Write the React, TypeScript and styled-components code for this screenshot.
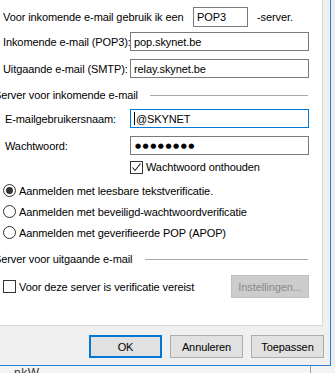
import React from 'react';
import styled, { createGlobalStyle } from 'styled-components';

const GlobalStyle = createGlobalStyle`
  html, body {
    margin: 0;
    padding: 0;
    background: #f2f2f2;
  }
  body {
    font-family: 'Liberation Sans', Arial, sans-serif;
    font-size: 11px;
    color: #000;
  }
`;

const Screen = styled.div`
  width: 335px;
  height: 373px;
  overflow: hidden;
  display: grid;
  grid-template-columns: 331px 4px;
  grid-template-rows: 366px 7px;
  background: #f2f2f2;
`;

const Dialog = styled.div`
  background: #f0f0f0;
  border-right: 1px solid #2a7fd4;
  border-bottom: 1px solid #2a7fd4;
  padding-right: 7px;
  display: flex;
  flex-direction: column;
`;

const SideStrip = styled.div`
  background: #ececec;
`;

const BelowStrip = styled.div`
  grid-column: 1 / span 2;
  position: relative;
  overflow: hidden;
  background: #f4f4f4;
  padding-left: 14px;
`;

const PeekText = styled.span`
  display: block;
  margin-top: 1px;
  font-size: 12px;
  line-height: 12px;
  color: #333;
  letter-spacing: 0.5px;
`;

const PeekEdge = styled.div`
  position: absolute;
  top: 0;
  bottom: 0;
  left: ${(p: { left: number }) => p.left}px;
  width: 1px;
  background: #9a9a9a;
`;

const TabPanel = styled.div`
  height: 326px;
  box-sizing: border-box;
  background: #fff;
  border-right: 1px solid #d9d9d9;
  border-bottom: 1px solid #d9d9d9;
  padding: 7px 0 0 3px;
  overflow: hidden;
  display: flex;
  flex-direction: column;
`;

const Row = styled.div<{ h: number; mt?: number; indent?: number }>`
  display: flex;
  align-items: center;
  height: ${(p) => p.h}px;
  margin-top: ${(p) => p.mt ?? 0}px;
  padding-left: ${(p) => p.indent ?? 0}px;
  white-space: nowrap;
`;

const Label = styled.span<{ w?: number; gap?: number }>`
  display: inline-block;
  width: ${(p) => (p.w ? `${p.w}px` : 'auto')};
  margin-left: ${(p) => p.gap ?? 0}px;
  flex: none;
  letter-spacing: -0.1px;
`;

const TextBox = styled.div<{ w: number; focused?: boolean }>`
  box-sizing: border-box;
  width: ${(p) => p.w}px;
  height: 100%;
  border: 1px solid ${(p) => (p.focused ? '#0078d7' : '#7a7a7a')};
  background: #fff;
  padding-left: 3px;
  display: flex;
  align-items: center;
  letter-spacing: -0.1px;
  flex: none;
`;

const Caret = styled.span`
  display: inline-block;
  width: 1px;
  height: 13px;
  background: #000;
  margin-right: 1px;
`;

const Dots = styled.span`
  font-family: 'DejaVu Sans', sans-serif;
  font-size: 7px;
  letter-spacing: 1.5px;
  padding-left: 1px;
`;

const Header = styled.div<{ mt: number; lineFrom: number }>`
  display: grid;
  grid-template-columns: ${(p) => p.lineFrom}px 1fr;
  align-items: center;
  height: 14px;
  margin-top: ${(p) => p.mt}px;
  margin-left: -9px;
  margin-right: 14px;
  white-space: nowrap;
  letter-spacing: -0.1px;
  &::after {
    content: '';
    height: 1px;
    background: #a8a8a8;
  }
`;

const Box = styled.span<{ round?: boolean }>`
  box-sizing: border-box;
  width: 13px;
  height: 13px;
  flex: none;
  border: 1px solid #333;
  border-radius: ${(p) => (p.round ? '50%' : '0')};
  background: #fff;
  display: inline-flex;
  align-items: center;
  justify-content: center;
  margin-right: 3px;
`;

const RadioDot = styled.span`
  width: 7px;
  height: 7px;
  border-radius: 50%;
  background: #333;
`;

const Spacer = styled.span`
  flex: 1;
`;

const Button = styled.button<{ primary?: boolean; disabled?: boolean }>`
  box-sizing: border-box;
  width: ${(p) => (p.disabled ? 78 : 73)}px;
  height: 23px;
  padding: 0;
  font-family: 'Liberation Sans', Arial, sans-serif;
  font-size: 11px;
  letter-spacing: -0.1px;
  color: ${(p) => (p.disabled ? '#8a8a8a' : '#000')};
  background: ${(p) => (p.disabled ? '#cccccc' : '#e1e1e1')};
  border: ${(p) => (p.primary ? '2px solid #0078d7' : p.disabled ? '1px solid #bfbfbf' : '1px solid #adadad')};
`;

const ButtonBar = styled.div`
  display: flex;
  justify-content: flex-end;
  gap: 8px;
  padding-top: 9px;
  margin-right: -1px;
`;

const CheckMark = () => (
  <svg width="11" height="11" viewBox="0 0 11 11">
    <polyline points="1.5,5.5 4,8.5 9.5,1.5" fill="none" stroke="#222" strokeWidth="1.1" />
  </svg>
);

const Radio = ({ checked, label }: { checked?: boolean; label: string }) => (
  <Row h={21}>
    <Box round>{checked && <RadioDot />}</Box>
    <Label>{label}</Label>
  </Row>
);

const App = () => {
  return (
    <>
      <GlobalStyle />
      <Screen>
        <Dialog>
          <TabPanel>
            <Row h={20}>
              <Label w={190}>Voor inkomende e-mail gebruik ik een</Label>
              <TextBox w={55}>POP3</TextBox>
              <Label gap={9}>-server.</Label>
            </Row>
            <Row h={19} mt={5}>
              <Label w={127}>Inkomende e-mail (POP3):</Label>
              <TextBox w={179}>pop.skynet.be</TextBox>
            </Row>
            <Row h={19} mt={8}>
              <Label w={127}>Uitgaande e-mail (SMTP):</Label>
              <TextBox w={179}>relay.skynet.be</TextBox>
            </Row>

            <Header mt={10} lineFrom={156}>Server voor inkomende e-mail</Header>
            <Row h={19} mt={7} indent={2}>
              <Label w={125}>E-mailgebruikersnaam:</Label>
              <TextBox w={179} focused>
                <Caret />@SKYNET
              </TextBox>
            </Row>
            <Row h={19} mt={8} indent={2}>
              <Label w={125}>Wachtwoord:</Label>
              <TextBox w={179}>
                <Dots>●●●●●●●●</Dots>
              </TextBox>
            </Row>
            <Row h={16} mt={4} indent={127}>
              <Box>
                <CheckMark />
              </Box>
              <Label>Wachtwoord onthouden</Label>
            </Row>
            <Row h={5} />
            <Radio checked label="Aanmelden met leesbare tekstverificatie." />
            <Radio label="Aanmelden met beveiligd-wachtwoordverificatie" />
            <Radio label="Aanmelden met geverifieerde POP (APOP)" />

            <Header mt={9} lineFrom={151}>Server voor uitgaande e-mail</Header>
            <Row h={23} mt={9}>
              <Box />
              <Label>Voor deze server is verificatie vereist</Label>
              <Spacer />
              <Button disabled style={{ marginRight: 13 }}>Instellingen...</Button>
            </Row>
          </TabPanel>
          <ButtonBar>
            <Button primary>OK</Button>
            <Button>Annuleren</Button>
            <Button>Toepassen</Button>
          </ButtonBar>
        </Dialog>
        <SideStrip />
        <BelowStrip>
          <PeekText>nkW</PeekText>
          <PeekEdge left={310} />
        </BelowStrip>
      </Screen>
    </>
  );
};

export default App;
